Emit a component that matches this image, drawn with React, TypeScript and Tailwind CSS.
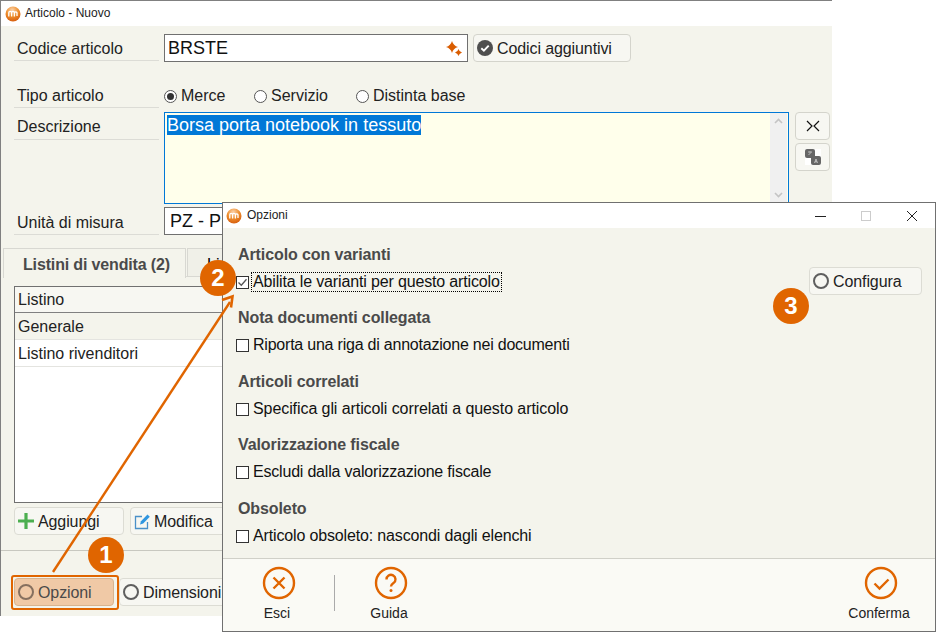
import React from "react";

const font = { fontFamily: '"Liberation Sans", Arial, sans-serif' };

function Logo({ id }: { id: string }) {
  return (
    <svg width="16" height="16" viewBox="0 0 16 16" className="shrink-0">
      <defs>
        <radialGradient id={id} cx="45%" cy="25%" r="80%">
          <stop offset="0%" stopColor="#fbd3ac" />
          <stop offset="50%" stopColor="#ee8f2e" />
          <stop offset="100%" stopColor="#d4580a" />
        </radialGradient>
      </defs>
      <circle cx="8" cy="8" r="7.5" fill={`url(#${id})`} />
      <path d="M4 11V7.2a1.4 1.4 0 0 1 2.8 0V11M6.8 7.2a1.4 1.4 0 0 1 2.8 0V11M9.6 7.2a1.4 1.4 0 0 1 2.6 0V10.5" fill="none" stroke="#fff" strokeWidth="1.3" transform="translate(-0.2 -0.5)" />
    </svg>
  );
}

function Ring({ tint = "#5f5f5f" }: { tint?: string }) {
  return <span className="w-[16px] h-[16px] rounded-full border-2 shrink-0" style={{ borderColor: tint }} />;
}

function Radio({ on, label, className }: { on?: boolean; label: string; className: string }) {
  return (
    <span className={`flex items-center ${className}`}>
      <span className="w-[13px] h-[13px] rounded-full border border-[#555] bg-white flex items-center justify-center mr-[4px]">
        {on && <span className="w-[7px] h-[7px] rounded-full bg-[#333]" />}
      </span>
      {label}
    </span>
  );
}

function Label({ text, className = "" }: { text: string; className?: string }) {
  return <div className={`w-[145px] ml-[13px] pl-[3px] border-b border-[#dcdcd6] text-[#222] ${className}`}>{text}</div>;
}

function BtnText({ children }: { children: React.ReactNode }) {
  return <span className="mt-[1px] tracking-[-0.1px]">{children}</span>;
}

function Check({ on, label, focus, tracking }: { on?: boolean; label: string; focus?: boolean; tracking: string }) {
  return (
    <div className="flex items-center h-[20px] ml-[13px]">
      <span className="w-[13px] h-[13px] border border-[#333] bg-white shrink-0 flex items-center justify-center mr-[3px]">
        {on && (
          <svg width="11" height="11" viewBox="0 0 11 11">
            <path d="M1.5 5.5l2.8 2.8 5.2-6" fill="none" stroke="#555" strokeWidth="1.3" />
          </svg>
        )}
      </span>
      <span className={`px-[1px] leading-[18px] text-[#111] ${tracking} ${focus ? "outline-1 outline-dotted outline-black" : ""}`}>{label}</span>
    </div>
  );
}

function Section({ title, label, className = "", on, focus, tracking }: { title: string; label: string; className?: string; on?: boolean; focus?: boolean; tracking: string }) {
  return (
    <div className={className}>
      <div className="ml-[15px] h-[20px] leading-[20px] font-bold tracking-[-0.1px] text-[#4a4a4a]">{title}</div>
      <div className="mt-[7px]">
        <Check on={on} label={label} focus={focus} tracking={tracking} />
      </div>
    </div>
  );
}

function Badge({ n, className }: { n: string; className: string }) {
  return (
    <div className={`absolute w-[36px] h-[36px] rounded-full bg-[#e06500] text-white font-bold text-[24px] flex items-center justify-center ${className}`}>
      {n}
    </div>
  );
}

function FooterAction({ label, children, className }: { label: string; children: React.ReactNode; className: string }) {
  return (
    <div className={`flex flex-col items-center ${className}`}>
      <svg width="34" height="34" viewBox="0 0 34 34" className="shrink-0">
        <circle cx="17" cy="17" r="15" fill="none" stroke="#e06500" strokeWidth="2.4" />
        {children}
      </svg>
      <span className="text-[14px] leading-[16px] mt-[5px] text-[#222] -translate-x-[2px]">{label}</span>
    </div>
  );
}

export default function App() {
  return (
    <div className="relative w-[936px] h-[632px] bg-white overflow-hidden text-[16px]" style={font}>
      {/* main window */}
      <div className="absolute left-0 top-0 w-[832px] h-[616px] flex flex-col border-t border-l border-[#808080]">
        <div className="h-[25px] bg-white flex items-center pl-[4px] text-[12px] text-[#222] gap-[4px] shrink-0">
          <Logo id="lg1" />
          <span className="mb-[2px]">Articolo - Nuovo</span>
        </div>
        <div className="flex-1 bg-[#f4f4ec] flex flex-col">
          <div className="flex mt-[8px] h-[28px]">
            <Label text="Codice articolo" className="h-[27px] leading-[30px]" />
            <div className="ml-[5px] w-[304px] h-[28px] border border-[#707070] bg-white flex items-center pl-[3px] pr-[5px] justify-between text-[18px] text-[#111]">
              BRSTE
              <svg width="16" height="16" viewBox="0 0 16 16">
                <path d="M6 1Q7.300 5.700 12 7Q7.300 8.300 6 13Q4.700 8.300 0 7Q4.700 5.700 6 1Z" fill="#d95c00" />
                <path d="M12.500 9Q13 11.500 16 12.500Q13 13.500 12.500 16Q12 13.500 9 12.500Q12 11.500 12.500 9Z" fill="#d95c00" />
              </svg>
            </div>
            <div className="ml-[5px] w-[158px] h-[28px] rounded-[4px] border border-[#d4d4cc] bg-[#f7f7f2] flex items-center pl-[3px] gap-[4px] text-[#222]">
              <svg width="16" height="16" viewBox="0 0 16 16" className="shrink-0">
                <circle cx="8" cy="8" r="8" fill="#4f4f4f" />
                <path d="M4.3 8.2l2.6 2.5 4.8-5" fill="none" stroke="#fff" strokeWidth="1.9" />
              </svg>
              <BtnText>Codici aggiuntivi</BtnText>
            </div>
          </div>

          <div className="flex mt-[19px] h-[28px]">
            <Label text="Tipo articolo" className="h-[27px] leading-[30px]" />
            <div className="ml-[5px] flex items-start pt-[5px] leading-[20px] text-[#222] h-[24px]">
              <Radio on label="Merce" className="w-[90px]" />
              <Radio label="Servizio" className="w-[102px]" />
              <Radio label="Distinta base" className="w-[120px]" />
            </div>
          </div>

          <div className="flex mt-[3px]">
            <Label text="Descrizione" className="h-[28px] leading-[30px]" />
            <div className="ml-[5px] w-[625px] h-[92px] border border-[#0078d7] bg-[#ffffeb] flex justify-between">
              <div className="pl-[2px] pt-[2px] text-[18px] leading-[21px]">
                <span className="bg-[#0078d7] text-white">Borsa porta notebook in tessuto</span>
              </div>
              <div className="w-[17px] mr-[1px] bg-[#f0f0f0] flex flex-col justify-between items-center py-[5px]">
                <svg width="9" height="6" viewBox="0 0 9 6"><path d="M1 5l3.5-3.5L8 5" fill="none" stroke="#c4c4c4" strokeWidth="1.6" /></svg>
                <svg width="9" height="6" viewBox="0 0 9 6"><path d="M1 1l3.5 3.5L8 1" fill="none" stroke="#c4c4c4" strokeWidth="1.6" /></svg>
              </div>
            </div>
            <div className="ml-[6px] flex flex-col gap-[3px]">
              <div className="w-[35px] h-[28px] rounded-[4px] border border-[#d4d4cc] bg-[#f7f7f2] flex items-center justify-center">
                <svg width="14" height="12" viewBox="0 0 14 12"><path d="M1 1l5 5-5 5M13 1L8 6l5 5" fill="none" stroke="#111" strokeWidth="1.2" /></svg>
              </div>
              <div className="w-[35px] h-[28px] rounded-[4px] border border-[#d4d4cc] bg-[#f7f7f2] flex items-center justify-center">
                <svg width="16" height="16" viewBox="0 0 16 16">
                  <rect width="16" height="16" fill="#fff" />
                  <rect x="0" y="0" width="10" height="9" rx="2" fill="#666" />
                  <rect x="6" y="7" width="10" height="9" rx="2" fill="#666" />
                  <path d="M3 3h4M5 2.500v1M3.500 6L6 3.500" stroke="#ddd" strokeWidth="0.7" fill="none" />
                  <path d="M9.500 14l1.500-4 1.500 4M10 12.800h2" stroke="#ddd" strokeWidth="0.7" fill="none" />
                </svg>
              </div>
            </div>
          </div>

          <div className="flex mt-[3px] h-[28px]">
            <Label text="Unità di misura" className="h-[28px] leading-[31px]" />
            <div className="ml-[5px] w-[200px] h-[28px] border border-[#707070] bg-white pl-[5px] text-[18px] leading-[26px] text-[#111]">PZ - PEZZI</div>
          </div>

          <div className="flex mt-[13px] ml-[2px] h-[29px] border-b border-[#dcdcd6] relative">
            <div className="w-[183px] h-[30px] border border-b-0 border-[#d8d8d2] bg-[#f4f4ec] z-10 pl-[19px] font-bold tracking-[-0.15px] text-[#4a4a4a] leading-[32px]">Listini di vendita (2)</div>
            <div className="ml-[1px] w-[120px] h-[29px] border border-[#d8d8d2] bg-[#f0f0e8] pl-[19px] leading-[32px]">Lingue</div>
          </div>

          <div className="ml-[13px] mt-[9px] w-[700px] h-[217px] border border-[#707070] bg-white text-[#222]">
            <div className="h-[26px] pl-[3px] leading-[26px] border-b border-[#808080] bg-[#f7f7f2]">Listino</div>
            <div className="h-[27px] pl-[3px] leading-[28px] border-b border-[#e4e4e0] bg-[#f4f4ec]">Generale</div>
            <div className="h-[27px] pl-[3px] leading-[28px] border-b border-[#e4e4e0]">Listino rivenditori</div>
          </div>

          <div className="flex ml-[13px] mt-[4px] gap-[6px]">
            <div className="w-[110px] h-[28px] rounded-[4px] border border-[#dcdcd4] bg-[#f7f7f2] flex items-center pl-[3px] gap-[4px] text-[#222]">
              <svg width="16" height="16" viewBox="0 0 16 16" className="shrink-0"><path d="M8 0v16M0 8h16" stroke="#4caf50" strokeWidth="3.2" /></svg>
              <BtnText>Aggiungi</BtnText>
            </div>
            <div className="w-[110px] h-[28px] rounded-[4px] border border-[#dcdcd4] bg-[#f7f7f2] flex items-center pl-[3px] gap-[3px] text-[#222]">
              <svg width="17" height="17" viewBox="0 0 17 17" className="shrink-0">
                <path d="M8 3.500H1.500v12h12V9" fill="none" stroke="#4a90c8" strokeWidth="1.300" />
                <path d="M6 11.500l1-3.200L13.500 1.500l2.300 2.300-6.600 6.800z" fill="#2f96e0" />
              </svg>
              <BtnText>Modifica</BtnText>
            </div>
          </div>

          <div className="mt-[15px] border-t border-[#c8c8c0] flex pl-[13px] pt-[27px] relative">
            <div className="w-[100px] h-[28px] rounded-[4px] border border-[#d8b490] bg-[#f0c9a6] flex items-center pl-[3px] gap-[4px] text-[#4a4a4a]">
              <Ring tint="#86705f" />
              <BtnText>Opzioni</BtnText>
            </div>
            <div className="ml-[5px] w-[110px] h-[28px] rounded-[4px] border border-[#dcdcd4] bg-[#f7f7f2] flex items-center pl-[3px] gap-[4px] text-[#222]">
              <Ring />
              <BtnText>Dimensioni</BtnText>
            </div>
            <div className="absolute left-[10px] top-[24px] w-[108px] h-[35px] rounded-[3px] border-[2px] border-[#e06500]" />
          </div>
        </div>
      </div>

      {/* dialog */}
      <div className="absolute left-[222px] top-[202px] w-[714px] h-[430px] border border-[#707070] flex flex-col bg-white">
        <div className="h-[25px] flex items-center pl-[3px] gap-[5px] text-[12px] text-[#222] shrink-0 relative">
          <Logo id="lg2" />
          <span className="mb-[2px]">Opzioni</span>
          <svg className="ml-auto mr-[16px]" width="104" height="12" viewBox="0 0 104 12">
            <path d="M0 6.500h11" stroke="#222" strokeWidth="1" />
            <rect x="46.500" y="1.500" width="9" height="9" fill="none" stroke="#ccc" />
            <path d="M92 1l10 10M102 1L92 11" stroke="#222" strokeWidth="1" />
          </svg>
        </div>
        <div className="h-[331px] bg-[#f4f4ec] border-b border-[#d0d0c8] flex flex-col relative">
          <Section className="mt-[17px]" title="Articolo con varianti" label="Abilita le varianti per questo articolo" tracking="tracking-[-0.15px]" on focus />
          <Section className="mt-[16px]" title="Nota documenti collegata" label="Riporta una riga di annotazione nei documenti" tracking="tracking-[-0.22px]" />
          <Section className="mt-[17px]" title="Articoli correlati" label="Specifica gli articoli correlati a questo articolo" tracking="tracking-[-0.08px]" />
          <Section className="mt-[16px]" title="Valorizzazione fiscale" label="Escludi dalla valorizzazione fiscale" tracking="tracking-[-0.2px]" />
          <Section className="mt-[17px]" title="Obsoleto" label="Articolo obsoleto: nascondi dagli elenchi" tracking="tracking-[-0.15px]" />
          <div className="absolute left-[586px] top-[39px] w-[113px] h-[28px] rounded-[4px] border border-[#dcdcd4] bg-[#f7f7f2] flex items-center pl-[3px] gap-[4px] text-[#222]">
            <Ring />
            <BtnText>Configura</BtnText>
          </div>
        </div>
        <div className="flex-1 bg-[#fafaf5] flex pt-[7px] relative">
          <FooterAction label="Esci" className="w-[34px] ml-[39px]">
            <path d="M11.500 11.500l11 11M22.500 11.500l-11 11" stroke="#e06500" strokeWidth="2.400" />
          </FooterAction>
          <div className="w-px h-[36px] bg-[#aaa] ml-[38px] mt-[9px]" />
          <FooterAction label="Guida" className="w-[34px] ml-[39px]">
            <path d="M12.500 13.500a4.500 4.500 0 1 1 7 3.600c-1.500 1-2.500 1.700-2.500 3.400" fill="none" stroke="#e06500" strokeWidth="2.400" />
            <circle cx="17" cy="24.500" r="1.500" fill="#e06500" />
          </FooterAction>
          <FooterAction label="Conferma" className="w-[34px] ml-auto mr-[37px]">
            <path d="M10.500 17.500l5 5 9-9" fill="none" stroke="#e06500" strokeWidth="2.400" />
          </FooterAction>
        </div>
      </div>

      {/* annotations */}
      <svg className="absolute left-0 top-0 pointer-events-none" width="936" height="632" viewBox="0 0 936 632">
        <path d="M53 572L230 302" stroke="#e06500" strokeWidth="2.400" fill="none" />
        <path d="M222 300l10.500-3.500-1.500 11" stroke="#e06500" strokeWidth="2.600" fill="none" />
      </svg>
      <Badge n="2" className="left-[200px] top-[260px]" />
      <Badge n="1" className="left-[88px] top-[537px]" />
      <Badge n="3" className="left-[773px] top-[288px]" />
    </div>
  );
}
